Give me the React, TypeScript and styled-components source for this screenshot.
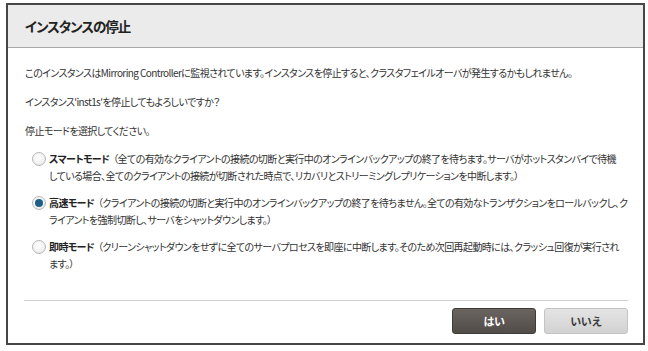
import styled, { createGlobalStyle } from "styled-components";

const GlobalStyle = createGlobalStyle`
  html, body {
    margin: 0;
    padding: 0;
    background: #ffffff;
  }
  body {
    font-family: "Noto Sans CJK JP", "Noto Sans", sans-serif;
    color: #333333;
  }
`;

const Page = styled.div`
  width: 648px;
  height: 351px;
  padding: 3px 3px 0 6px;
  box-sizing: border-box;
  overflow: hidden;
`;

const Dialog = styled.div`
  width: 639px;
  height: 342px;
  box-sizing: border-box;
  border: 2px solid #464646;
  background: #ffffff;
  display: flex;
  flex-direction: column;
`;

const Header = styled.div`
  height: 43px;
  flex-shrink: 0;
  box-sizing: border-box;
  background: #ebebeb;
  border-bottom: 1px solid #a8a8a8;
  display: flex;
  align-items: center;
  padding-left: 17px;
`;

const Title = styled.h1`
  margin: 0;
  font-size: 13.5px;
  letter-spacing: -1px;
  font-weight: 700;
  color: #222222;
  font-feature-settings: "palt";
`;

const Body = styled.div`
  padding: 16px 15px 0 17px;
  display: flex;
  flex-direction: column;
  gap: 12px;
  font-size: 10px;
  letter-spacing: -0.6px;
  line-height: 17px;
  font-feature-settings: "palt";
`;

const Text = styled.p`
  margin: 0;
  white-space: nowrap;
`;

const ModeList = styled.div`
  display: flex;
  flex-direction: column;
  gap: 10px;
  padding-left: 7px;
  margin-top: -1px;
`;

const ModeRow = styled.label`
  display: flex;
  align-items: flex-start;
  gap: 3px;
`;

const Radio = styled.span<{ $checked?: boolean }>`
  width: 12px;
  height: 12px;
  flex-shrink: 0;
  margin-top: 2px;
  border-radius: 50%;
  border: 1px solid #b8b8b8;
  background: radial-gradient(circle at 40% 35%, #ffffff 0%, #f2f2f2 55%, #dcdcdc 100%);
  display: flex;
  align-items: center;
  justify-content: center;

  &::after {
    content: "";
    width: 8px;
    height: 8px;
    border-radius: 50%;
    background: ${(p) => (p.$checked ? "#1d5f86" : "transparent")};
  }
`;

const ModeText = styled.div`
  white-space: nowrap;
`;

const ModeName = styled.b`
  font-weight: 700;
  color: #222222;
  margin-right: 4px;
`;

const Footer = styled.div`
  margin: auto 15px 0 16px;
  border-top: 1px solid #cfcfcf;
  padding: 7px 0 9px;
  display: flex;
  justify-content: flex-end;
  gap: 8px;
`;

const Button = styled.button<{ $primary?: boolean }>`
  width: 84px;
  height: 26px;
  border-radius: 3px;
  font-family: "Noto Sans CJK JP", sans-serif;
  font-size: 11px;
  font-weight: 700;
  letter-spacing: -0.5px;
  cursor: pointer;
  border: 1px solid ${(p) => (p.$primary ? "#3f3b38" : "#c4c4c4")};
  color: ${(p) => (p.$primary ? "#ffffff" : "#3a3a3a")};
  background: ${(p) =>
    p.$primary
      ? "linear-gradient(#6a6560, #514c48)"
      : "linear-gradient(#e4e4e4, #d2d2d2)"};
`;

const modes = [
  {
    name: "スマートモード",
    lines: [
      "（全ての有効なクライアントの接続の切断と実行中のオンラインバックアップの終了を待ちます。サーバがホットスタンバイで待機",
      "している場合、全てのクライアントの接続が切断された時点で、リカバリとストリーミングレプリケーションを中断します。）",
    ],
    checked: false,
  },
  {
    name: "高速モード",
    lines: [
      "（クライアントの接続の切断と実行中のオンラインバックアップの終了を待ちません。全ての有効なトランザクションをロールバックし、ク",
      "ライアントを強制切断し、サーバをシャットダウンします。）",
    ],
    checked: true,
  },
  {
    name: "即時モード",
    lines: [
      "（クリーンシャットダウンをせずに全てのサーバプロセスを即座に中断します。そのため次回再起動時には、クラッシュ回復が実行され",
      "ます。）",
    ],
    checked: false,
  },
];

export default function App() {
  return (
    <>
      <GlobalStyle />
      <Page>
        <Dialog>
          <Header>
            <Title>インスタンスの停止</Title>
          </Header>
          <Body>
            <Text>
              このインスタンスはMirroring Controllerに監視されています。インスタンスを停止すると、クラスタフェイルオーバが発生するかもしれません。
            </Text>
            <Text>インスタンス'inst1s'を停止してもよろしいですか？</Text>
            <Text>停止モードを選択してください。</Text>
            <ModeList>
              {modes.map((m) => (
                <ModeRow key={m.name}>
                  <Radio $checked={m.checked} />
                  <ModeText>
                    <ModeName>{m.name}</ModeName>
                    {m.lines[0]}
                    <br />
                    {m.lines[1]}
                  </ModeText>
                </ModeRow>
              ))}
            </ModeList>
          </Body>
          <Footer>
            <Button $primary>はい</Button>
            <Button>いいえ</Button>
          </Footer>
        </Dialog>
      </Page>
    </>
  );
}
